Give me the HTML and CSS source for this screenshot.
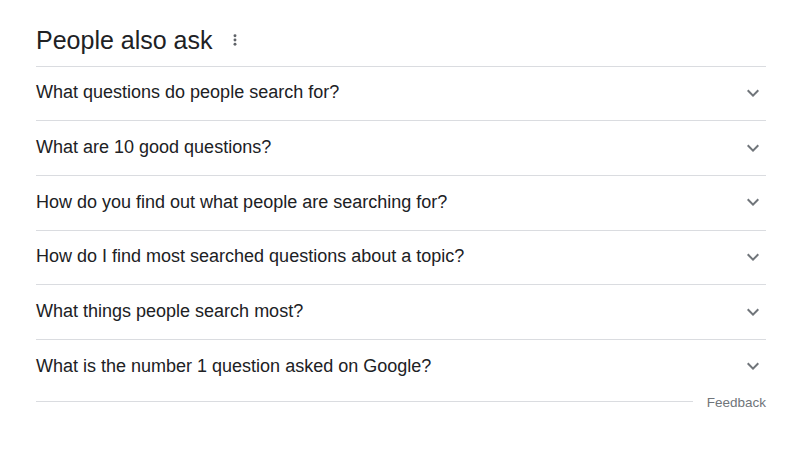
FILE: index.html
```html
<!DOCTYPE html>
<html>
<head>
<meta charset="utf-8">
<link rel="stylesheet" href="styles.css">
</head>
<body>
<div class="paa">
  <div class="header">
    <h2 class="title">People also ask</h2>
    <svg class="kebab" viewBox="0 0 24 24" width="16" height="16"><circle cx="12" cy="5.5" r="2.2"/><circle cx="12" cy="12" r="2.2"/><circle cx="12" cy="18.5" r="2.2"/></svg>
  </div>
  <div class="row"><span class="q">What questions do people search for?</span><svg class="chev" viewBox="0 0 24 24" width="24" height="24"><path d="M16.59 8.59L12 13.17 7.41 8.59 6 10l6 6 6-6z"/></svg></div>
  <div class="row"><span class="q">What are 10 good questions?</span><svg class="chev" viewBox="0 0 24 24" width="24" height="24"><path d="M16.59 8.59L12 13.17 7.41 8.59 6 10l6 6 6-6z"/></svg></div>
  <div class="row"><span class="q">How do you find out what people are searching for?</span><svg class="chev" viewBox="0 0 24 24" width="24" height="24"><path d="M16.59 8.59L12 13.17 7.41 8.59 6 10l6 6 6-6z"/></svg></div>
  <div class="row"><span class="q">How do I find most searched questions about a topic?</span><svg class="chev" viewBox="0 0 24 24" width="24" height="24"><path d="M16.59 8.59L12 13.17 7.41 8.59 6 10l6 6 6-6z"/></svg></div>
  <div class="row"><span class="q">What things people search most?</span><svg class="chev" viewBox="0 0 24 24" width="24" height="24"><path d="M16.59 8.59L12 13.17 7.41 8.59 6 10l6 6 6-6z"/></svg></div>
  <div class="row"><span class="q">What is the number 1 question asked on Google?</span><svg class="chev" viewBox="0 0 24 24" width="24" height="24"><path d="M16.59 8.59L12 13.17 7.41 8.59 6 10l6 6 6-6z"/></svg></div>
  <div class="footer">
    <div class="line"></div>
    <span class="feedback">Feedback</span>
  </div>
</div>
</body>
</html>
```
FILE: styles.css
```css
html, body {
  margin: 0;
  padding: 0;
  background: #ffffff;
}
body {
  font-family: "Liberation Sans", Arial, sans-serif;
  color: #202124;
}
.paa {
  width: 730px;
  margin-left: 36px;
  padding-top: 14px;
}
.header {
  height: 51.5px;
  display: flex;
  align-items: center;
}
.title {
  margin: 0;
  font-size: 25px;
  font-weight: normal;
  line-height: 30px;
  color: #202124;
}
.kebab {
  margin-left: 14px;
  fill: #5f6368;
}
.row {
  height: 53.7px;
  box-sizing: content-box;
  border-top: 1px solid #dadce0;
  display: flex;
  align-items: center;
  justify-content: space-between;
}
.q {
  font-size: 18px;
  line-height: 24px;
  color: #202124;
  padding-bottom: 2px;
}
.chev {
  fill: #70757a;
  margin-right: 1px;
  margin-bottom: 1px;
}
.footer {
  height: 15px;
  display: flex;
  align-items: center;
}
.line {
  flex: 1;
  border-top: 1px solid #dadce0;
}
.feedback {
  padding-left: 14px;
  padding-top: 3px;
  font-size: 13.5px;
  line-height: 14px;
  color: #70757a;
}
```
